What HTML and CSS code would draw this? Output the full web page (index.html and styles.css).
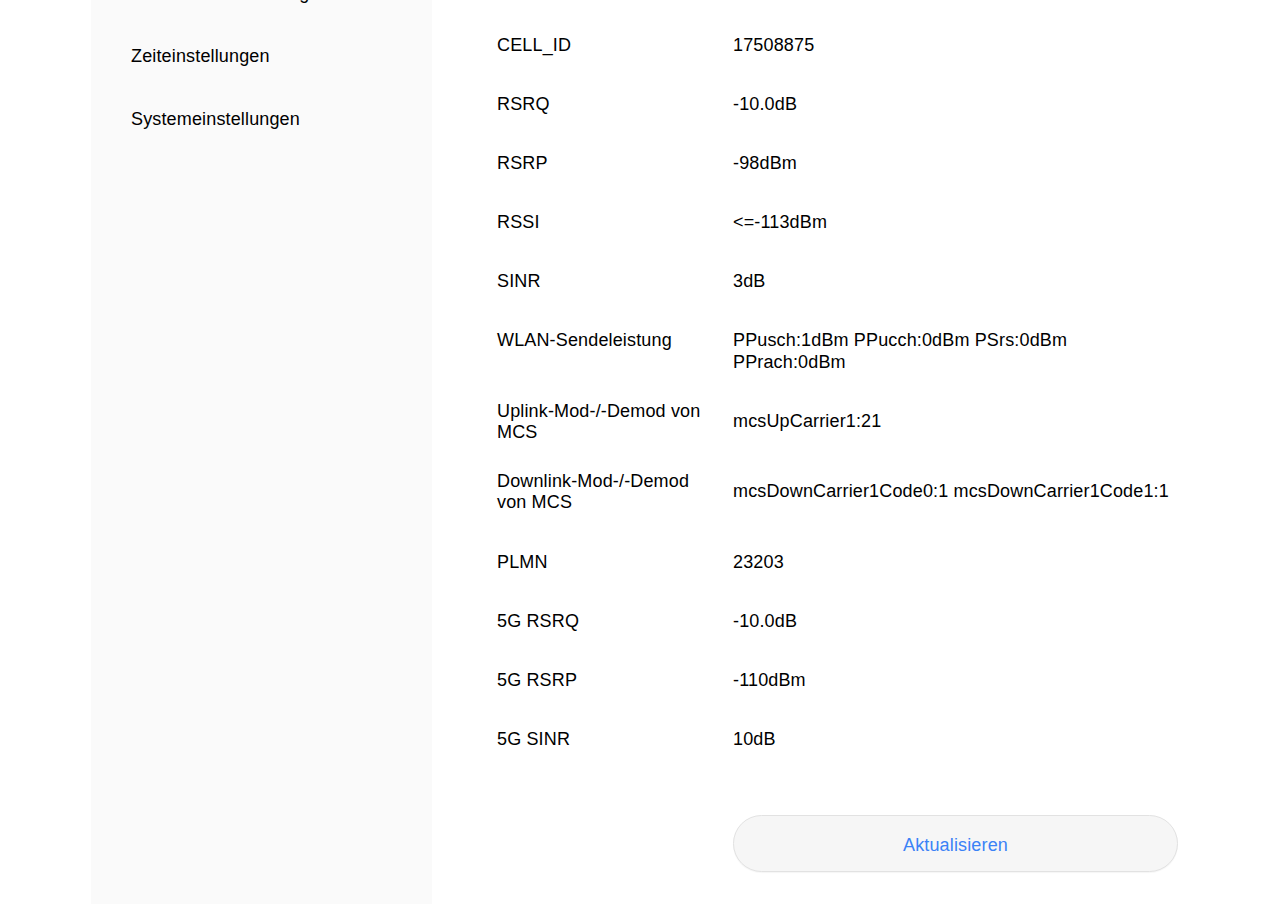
FILE: index.html
```html
<!DOCTYPE html>
<html lang="de">
<head>
<meta charset="utf-8">
<title>Geräteinformationen</title>
<link rel="stylesheet" href="styles.css">
</head>
<body>
<div class="layout">
  <nav class="sidebar">
    <a class="nav-item">Sicherheitseinstellungen</a>
    <a class="nav-item">Zeiteinstellungen</a>
    <a class="nav-item">Systemeinstellungen</a>
  </nav>
  <main class="content">
    <div class="info">
      <div class="row"><div class="label">CELL_ID</div><div class="value">17508875</div></div>
      <div class="row"><div class="label">RSRQ</div><div class="value">-10.0dB</div></div>
      <div class="row"><div class="label">RSRP</div><div class="value">-98dBm</div></div>
      <div class="row"><div class="label">RSSI</div><div class="value">&lt;=-113dBm</div></div>
      <div class="row"><div class="label">SINR</div><div class="value">3dB</div></div>
      <div class="row row--top"><div class="label">WLAN-Sendeleistung</div><div class="value">PPusch:1dBm PPucch:0dBm PSrs:0dBm PPrach:0dBm</div></div>
      <div class="row"><div class="label">Uplink-Mod-/-Demod von MCS</div><div class="value">mcsUpCarrier1:21</div></div>
      <div class="row row--tall"><div class="label">Downlink-Mod-/-Demod von MCS</div><div class="value">mcsDownCarrier1Code0:1 mcsDownCarrier1Code1:1</div></div>
      <div class="row"><div class="label">PLMN</div><div class="value">23203</div></div>
      <div class="row"><div class="label">5G RSRQ</div><div class="value">-10.0dB</div></div>
      <div class="row"><div class="label">5G RSRP</div><div class="value">-110dBm</div></div>
      <div class="row"><div class="label">5G SINR</div><div class="value">10dB</div></div>
    </div>
    <div class="actions">
      <button class="btn" type="button">Aktualisieren</button>
    </div>
  </main>
</div>
</body>
</html>
```

FILE: styles.css
```css
html, body {
  margin: 0;
  padding: 0;
  background: #ffffff;
  overflow: hidden;
}

body {
  font-family: "Liberation Sans", Arial, Helvetica, sans-serif;
  font-size: 18px;
  letter-spacing: 0.15px;
  color: #000000;
}

.layout {
  display: flex;
  margin: -39px 0 0 91px;
  min-height: 980px;
}

.sidebar {
  width: 341px;
  flex: 0 0 341px;
  background: #fafafa;
  display: flex;
  flex-direction: column;
}

.nav-item {
  display: block;
  padding: 21px 0 20px 40px;
  line-height: 22px;
  color: #000000;
  text-decoration: none;
}

.content {
  padding: 54px 0 0 65px;
  display: flex;
  flex-direction: column;
}

.info {
  display: flex;
  flex-direction: column;
}

.row {
  display: flex;
  align-items: center;
  min-height: 59px;
}

.row--top {
  align-items: flex-start;
  padding: 18.5px 0;
  box-sizing: border-box;
}

.row--top .label {
  line-height: 22px;
  padding-top: 0;
}

.row--tall {
  min-height: 82px;
}

.label {
  width: 236px;
  flex: 0 0 236px;
  line-height: 21px;
  padding: 2px 16px 0 0;
  box-sizing: border-box;
}

.value {
  width: 445px;
  flex: 0 0 445px;
  line-height: 22px;
}

.actions {
  padding: 47px 0 0 236px;
}

.btn {
  width: 445px;
  height: 57px;
  padding: 3px 0 0;
  border: 1px solid #e2e2e2;
  border-radius: 29px;
  background: #f6f6f6;
  color: #3b82f6;
  font-family: "Liberation Sans", Arial, Helvetica, sans-serif;
  font-size: 18px;
  letter-spacing: 0.15px;
  cursor: pointer;
  box-shadow: 0 1px 1px rgba(0, 0, 0, 0.04);
}
```
